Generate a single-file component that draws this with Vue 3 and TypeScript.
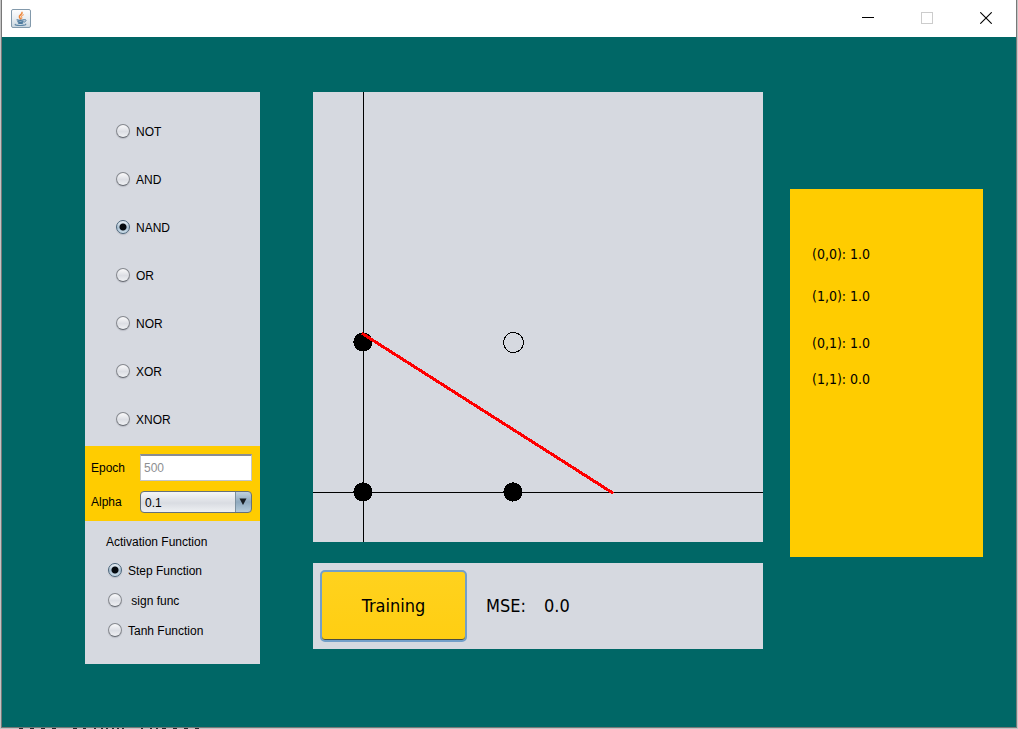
<script setup lang="ts">
import { computed, ref } from 'vue'

interface Option {
  value: string
  label: string
}

interface Sample {
  x: number
  y: number
  output: number
}

const gates: string[] = ['NOT', 'AND', 'NAND', 'OR', 'NOR', 'XOR', 'XNOR']
const activations: Option[] = [
  { value: 'step', label: 'Step Function' },
  { value: 'sign', label: '\u00a0sign func' },
  { value: 'tanh', label: 'Tanh Function' },
]
const alphas: string[] = ['0.1', '0.2', '0.3', '0.5']

const gate = ref('NAND')
const activation = ref('step')
const epoch = ref('500')
const alpha = ref('0.1')
const mse = ref(0)

const samples = ref<Sample[]>([
  { x: 0, y: 0, output: 1 },
  { x: 1, y: 0, output: 1 },
  { x: 0, y: 1, output: 1 },
  { x: 1, y: 1, output: 0 },
])

const filled = computed(() => samples.value.filter((s) => s.output > 0))
const hollow = computed(() => samples.value.filter((s) => s.output <= 0))

const px = (v: number): number => 50 + v * 150
const py = (v: number): number => 400 - v * 150
</script>

<template>
  <div class="desktop">
    <div class="window">
      <header class="titlebar">
        <svg class="app-icon" width="20" height="20" viewBox="0 0 20 20" aria-hidden="true">
          <defs>
            <linearGradient id="tile" x1="0" y1="0" x2="0" y2="1">
              <stop offset="0" stop-color="#fdfdfe" />
              <stop offset="0.5" stop-color="#e9eef2" />
              <stop offset="1" stop-color="#c9d5de" />
            </linearGradient>
          </defs>
          <rect x="0.5" y="0.5" width="19" height="18" rx="1.5" fill="url(#tile)" stroke="#8299ab" />
          <g fill="none" stroke-linecap="round">
            <path d="M11 3.3C12 5.2 7.4 6 8.4 8.2C8.8 9 9.5 9.2 9.4 10" stroke="#ee8436" stroke-width="1.5" />
            <path d="M12.4 5.8C10.5 6.6 10 7.4 10.8 8.3C11.2 8.9 10.7 9.4 10.4 9.8" stroke="#f3a163" stroke-width="1.1" />
            <path d="M6 10.8C7 11.5 11.5 11.4 13 10.8M6.8 12.6C8.3 13.2 10.8 13.1 12.2 12.6M7.5 14.2C9 14.6 10.5 14.5 11.6 14.1" stroke="#4e7b9e" stroke-width="1.2" />
            <path d="M13.6 10.7C16 10.2 15.5 12.5 13.1 13.2" stroke="#4e7b9e" />
            <path d="M4.3 15.3C2.8 16.8 14.8 17 14.8 15.2" stroke="#5d86a6" stroke-width="1.2" />
          </g>
        </svg>
        <div class="controls">
          <button type="button" aria-label="Minimize">
            <svg width="12" height="12" viewBox="0 0 12 12"><path d="M0 5.5H12" stroke="#000" /></svg>
          </button>
          <button type="button" aria-label="Maximize" disabled>
            <svg width="12" height="12" viewBox="0 0 12 12"><rect x="0.5" y="0.5" width="11" height="11" fill="none" stroke="#ccc" /></svg>
          </button>
          <button type="button" aria-label="Close">
            <svg width="12" height="12" viewBox="0 0 12 12"><path d="M0.3 0.3L11.7 11.7M11.7 0.3L0.3 11.7" stroke="#000" stroke-width="1.1" /></svg>
          </button>
        </div>
      </header>

      <main class="content">
        <section class="sidebar">
          <div class="gates" role="radiogroup" aria-label="Gate">
            <label v-for="g in gates" :key="g" class="radio">
              <input v-model="gate" type="radio" name="gate" :value="g" />
              <span>{{ g }}</span>
            </label>
          </div>

          <div class="params">
            <label for="epoch">Epoch</label>
            <input id="epoch" v-model="epoch" class="field" type="text" disabled />
            <label for="alpha">Alpha</label>
            <div class="combo">
              <select id="alpha" v-model="alpha">
                <option v-for="a in alphas" :key="a" :value="a">{{ a }}</option>
              </select>
              <svg width="16" height="21" viewBox="0 0 16 21" aria-hidden="true">
                <path d="M4.5 7.5H11.5L8 14Z" fill="#171c22" />
              </svg>
            </div>
          </div>

          <fieldset class="activations">
            <legend>Activation Function</legend>
            <label v-for="a in activations" :key="a.value" class="radio">
              <input v-model="activation" type="radio" name="activation" :value="a.value" />
              <span>{{ a.label }}</span>
            </label>
          </fieldset>
        </section>

        <div class="center">
          <svg class="plot" viewBox="0 0 450 450" role="img" aria-label="Decision boundary">
            <g stroke="#000" shape-rendering="crispEdges">
              <path d="M50.5 0V450M0 400.5H450" />
            </g>
            <circle v-for="s in filled" :key="`f${s.x}${s.y}`" :cx="px(s.x)" :cy="py(s.y)" r="9.6" shape-rendering="crispEdges" />
            <circle v-for="s in hollow" :key="`h${s.x}${s.y}`" :cx="px(s.x) + 0.5" :cy="py(s.y) + 0.5" r="10" fill="none" stroke="#000" shape-rendering="crispEdges" />
            <path d="M50 242L299 400.5" stroke="#f00" stroke-width="3" stroke-linecap="square" shape-rendering="crispEdges" />
          </svg>

          <div class="train">
            <button type="button" class="train-button">Training</button>
            <span class="mse-label">MSE:</span>
            <output>{{ mse.toFixed(1) }}</output>
          </div>
        </div>

        <section class="results" aria-label="Results">
          <p v-for="s in samples" :key="`${s.x}${s.y}`">({{ s.x }},{{ s.y }}): {{ s.output.toFixed(1) }}</p>
        </section>
      </main>
    </div>
    <svg class="behind" width="200" height="1" viewBox="0 0 200 1" aria-hidden="true">
      <path
        d="M18 .5h4M29 .5h4M40 .5h4M51 .5h4M72 .5h4M82 .5h3M93 .5h2M100 .5h2M105 .5h2M111 .5h2M116 .5h2M121 .5h2M140 .5h2M149 .5h2M155 .5h2M161 .5h4M172 .5h4M183 .5h4M194 .5h4"
        stroke="#26262e"
      />
    </svg>
  </div>
</template>

<style>
body {
  background: #c4c4c4;
}
</style>

<style scoped>
.desktop {
  box-sizing: border-box;
  min-height: 100vh;
  display: flex;
  flex-direction: column;
  padding: 0 1px;
  background: #c4c4c4;
  color: #000;
  font: 12px/16px "Liberation Sans", Arial, sans-serif;
}

.behind {
  display: block;
}

.window {
  flex: 1;
  display: flex;
  flex-direction: column;
  border: 1px solid #787878;
  border-top: 0;
  background: #006766;
}

.titlebar {
  box-sizing: border-box;
  display: flex;
  justify-content: space-between;
  align-items: center;
  height: 37px;
  padding: 0 1px 1px 9px;
  background: #fff;
}

.app-icon {
  margin-top: 1px;
}

.controls {
  display: flex;
  align-self: stretch;
}

.controls button {
  display: grid;
  place-items: center;
  width: 59px;
  padding: 0;
  border: 0;
  background: none;
}

.content {
  flex: 1;
  display: grid;
  grid-template-columns: 175px minmax(0, 1fr) 193px;
  align-items: start;
  padding: 55px 33px 40px 83px;
}

.sidebar {
  background: #d6d9e0;
}

.gates {
  display: grid;
  grid-auto-rows: 48px;
  padding: 15px 0 3px 31px;
}

.radio {
  display: flex;
  align-items: center;
  gap: 6px;
}

.radio span {
  padding-top: 2px;
}

.radio input {
  appearance: none;
  box-sizing: border-box;
  width: 14px;
  height: 14px;
  margin: 0;
  border: 1px solid #85888e;
  border-bottom-color: #666a72;
  border-radius: 50%;
  background: linear-gradient(#fafafb, #dcdee4 55%, #f0f1f4);
  box-shadow: 0 1px 1px #b9bcc4;
}

.radio input:checked {
  border-color: #4a6479;
  background:
    radial-gradient(circle, #060a0e 0 3px, transparent 4px),
    linear-gradient(#edf3f8, #aac0d2 55%, #cddfeb);
}

.params {
  display: grid;
  grid-template-columns: 42px 1fr;
  grid-template-rows: 27px 23px;
  gap: 9px 7px;
  align-items: center;
  padding: 8px 8px 8px 6px;
  background: #fc0;
}

.field {
  box-sizing: border-box;
  width: 100%;
  height: 27px;
  padding: 0 3px;
  border: 1px solid #c3c5c9;
  border-top: 2px solid #898c93;
  background: #fff;
  color: #8e8f91;
  font: inherit;
}

.combo {
  display: grid;
  grid-template-columns: 1fr 17px;
  align-items: center;
}

.combo select {
  grid-area: 1 / 1 / 2 / 3;
  appearance: none;
  box-sizing: border-box;
  width: 100%;
  height: 22px;
  padding: 2px 20px 0 4px;
  border: 1px solid #65707b;
  border-radius: 4px;
  background:
    linear-gradient(#7c909f, #7c909f) right 15px top / 1px 100% no-repeat,
    linear-gradient(#c1d1de, #8fa9be 50%, #b5cbdb) right / 15px 100% no-repeat,
    linear-gradient(#f5f6f8, #d9dce2 55%, #eef0f3);
  color: #000;
  font: inherit;
}

.combo svg {
  grid-area: 1 / 2 / 2 / 3;
  pointer-events: none;
}

.activations {
  display: grid;
  grid-auto-rows: 30px;
  margin: 0;
  padding: 0 0 19px 23px;
  border: 0;
}

.activations legend {
  height: 21px;
  margin-left: -2px;
  padding: 13px 0 0;
}

.center {
  display: flex;
  flex-direction: column;
  gap: 21px;
  padding: 0 27px 0 53px;
}

.plot {
  display: block;
  width: 100%;
  background: #d6d9e0;
}

.train {
  display: flex;
  align-items: center;
  padding: 7px;
  background: #d6d9e0;
  font: 18px/24px "DejaVu Sans Condensed", Tahoma, "DejaVu Sans", sans-serif;
}

.train-button {
  box-sizing: border-box;
  width: 147px;
  height: 72px;
  padding: 0;
  border: 2px solid #739fc9;
  border-radius: 5px;
  background: linear-gradient(#ffd21e, #ffce12);
  box-shadow: inset 0 -1px 0 #4a4d42;
  color: #000;
  font: inherit;
}

.mse-label {
  margin: 0 18px 0 19px;
}

.results {
  display: grid;
  grid-template-rows: 42px 47px 36px 20px;
  margin-top: 97px;
  padding: 55px 22px 168px;
  background: #fc0;
  font: 14px/20px "DejaVu Sans Condensed", Tahoma, "DejaVu Sans", sans-serif;
}

.results p {
  margin: 0;
}
</style>
